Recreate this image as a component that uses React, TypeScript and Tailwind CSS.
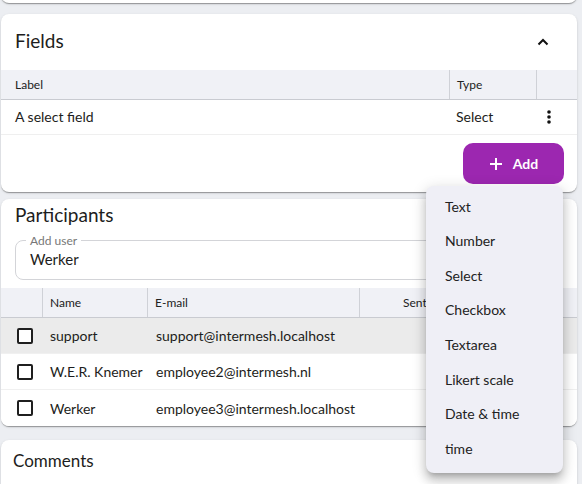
import React from "react";

const cardShadow =
  "shadow-[0_2px_1px_-1px_rgba(0,0,0,0.2),0_1px_1px_0_rgba(0,0,0,0.14),0_1px_3px_0_rgba(0,0,0,0.12)]";

function Checkbox() {
  return <div className="w-4 h-4 border-2 border-[#1f1f1f] rounded-[2px] bg-white" />;
}

export default function App() {
  const menu = ["Text", "Number", "Select", "Checkbox", "Textarea", "Likert scale", "Date & time", "time"];
  const people = [
    { name: "support", email: "support@intermesh.localhost", hl: true },
    { name: "W.E.R. Knemer", email: "employee2@intermesh.nl", hl: false },
    { name: "Werker", email: "employee3@intermesh.localhost", hl: false },
  ];
  return (
    <div className="relative w-[582px] h-[484px] overflow-hidden bg-[#eceef2] font-[Lato,sans-serif] text-[#1d1d20]">
      <div className="pl-[1px] pr-[5px]">
        {/* previous card bottom */}
        <div className={`h-[3px] -mt-[6px] pt-[6px] box-content bg-white rounded-b-lg ${cardShadow}`} />

        {/* Fields card */}
        <div className={`mt-[11px] bg-white rounded-lg ${cardShadow}`}>
          <div className="h-[56px] flex items-center justify-between pl-[14px] pr-[28px] pb-[1px]">
            <span className="text-[19px]">Fields</span>
            <svg width="12" height="8" viewBox="0 0 12 8" fill="none">
              <path d="M1.5 6.5L6 2L10.5 6.5" stroke="#111" strokeWidth="2" />
            </svg>
          </div>
          <div className="flex h-[30px] bg-[#f0f1f6] border-b border-[#c9cbd1] text-[12px] text-[#222]">
            <div className="flex-1 flex items-center pl-[14px]">Label</div>
            <div className="w-[87px] flex items-center pl-[7px] border-l border-[#cfd1d7]">Type</div>
            <div className="w-[41px] border-l border-[#cfd1d7]" />
          </div>
          <div className="flex h-[35px] border-b border-[#efefef] text-[14px] pb-[2px]">
            <div className="flex-1 flex items-center pl-[14px]">A select field</div>
            <div className="w-[87px] flex items-center pl-[7px]">Select</div>
            <div className="w-[41px] flex items-center pl-[11px] pt-[2px]">
              <svg width="4" height="14" viewBox="0 0 4 14">
                <circle cx="2" cy="2" r="1.8" fill="#111" />
                <circle cx="2" cy="7" r="1.8" fill="#111" />
                <circle cx="2" cy="12" r="1.8" fill="#111" />
              </svg>
            </div>
          </div>
          <div className="flex justify-end pt-[8px] pb-[8px] pr-[13px]">
            <button className="w-[101px] h-[41px] rounded-[10px] bg-[#9c27b0] text-white flex items-center justify-center gap-[10px] text-[14px] font-bold">
              <svg width="14" height="14" viewBox="0 0 14 14">
                <path d="M7 1V13M1 7H13" stroke="#fff" strokeWidth="2" />
              </svg>
              <span>Add</span>
            </button>
          </div>
        </div>

        {/* Participants card */}
        <div className={`mt-[7px] bg-white rounded-lg overflow-hidden ${cardShadow}`}>
          <div className="h-[34px] flex items-center pl-[14px] pb-[1px]">
            <span className="text-[19px]">Participants</span>
          </div>
          <div className="px-[14px] pt-[7px]">
            <div className="relative h-[40px] border border-[#d3d4d8] rounded-lg flex items-center pl-[14px] pb-[1px]">
              <span className="absolute -top-[9px] left-[10px] px-[4px] bg-white text-[12px] text-[#777]">Add user</span>
              <span className="text-[15px]">Werker</span>
            </div>
          </div>
          <div className="mt-[8px] flex h-[30px] bg-[#f0f1f6] border-b border-[#c9cbd1] text-[12px] text-[#222]">
            <div className="w-[41px]" />
            <div className="w-[105px] flex items-center pl-[7px] border-l border-[#cfd1d7]">Name</div>
            <div className="w-[212px] flex items-center pl-[7px] border-l border-[#cfd1d7]">E-mail</div>
            <div className="flex-1 flex items-center pl-[43px] border-l border-[#cfd1d7]">Sent</div>
          </div>
          {people.map((p, i) => (
            <div
              key={p.name}
              className={`flex h-[36px] text-[14px] ${p.hl ? "bg-[#ebebeb]" : "bg-white"} ${i < 2 ? "border-b border-[#f0f0f0]" : ""}`}
            >
              <div className="w-[41px] flex items-center pl-[16px]">
                <Checkbox />
              </div>
              <div className="w-[106px] flex items-center pl-[8px]">{p.name}</div>
              <div className="flex-1 flex items-center pl-[8px]">{p.email}</div>
            </div>
          ))}
        </div>

        {/* Comments card */}
        <div className={`mt-[14px] h-[80px] bg-white rounded-lg ${cardShadow}`}>
          <div className="h-[42px] flex items-center pl-[12px]">
            <span className="text-[17px]">Comments</span>
          </div>
        </div>
      </div>

      {/* Dropdown menu */}
      <div className="absolute left-[426px] top-[186px] w-[137px] h-[287px] rounded-lg bg-[#efeff6] py-[3px] shadow-[0_5px_5px_-3px_rgba(0,0,0,0.2),0_8px_10px_1px_rgba(0,0,0,0.14),0_3px_14px_2px_rgba(0,0,0,0.12)]">
        {menu.map((m) => (
          <div key={m} className="h-[34.57px] flex items-center pl-[19px] text-[14px] text-[#222]">
            {m}
          </div>
        ))}
      </div>
    </div>
  );
}
